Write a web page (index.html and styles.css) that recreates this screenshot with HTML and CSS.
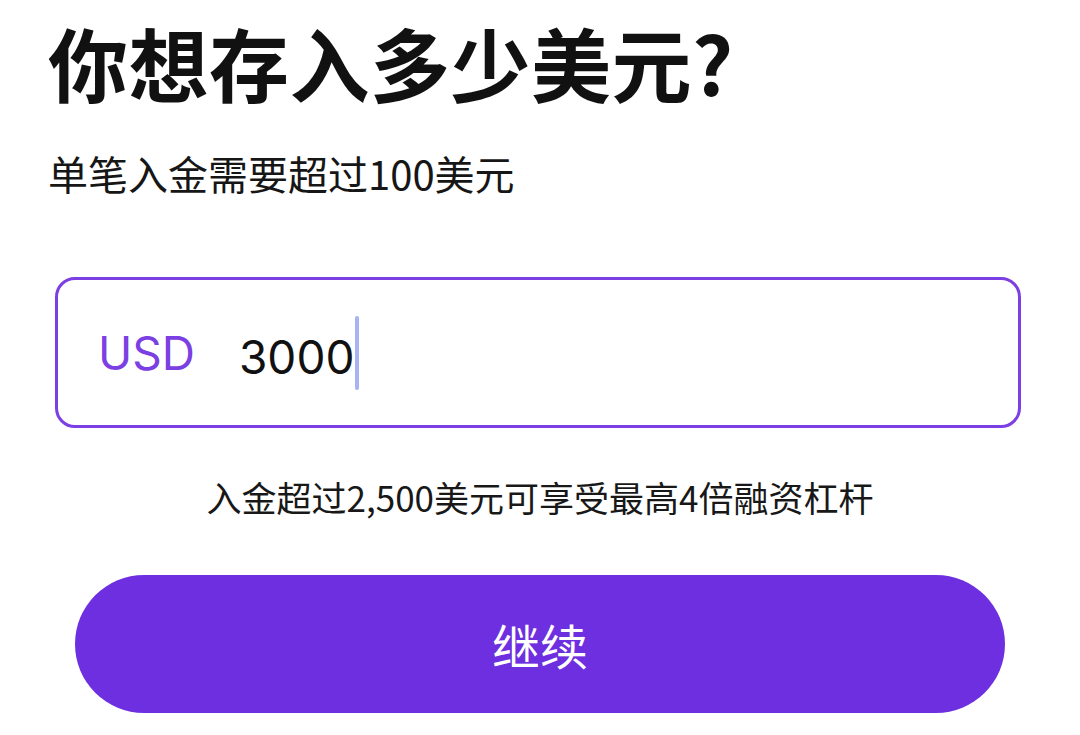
FILE: index.html
```html
<!DOCTYPE html>
<html lang="zh-CN">
<head>
<meta charset="utf-8">
<link rel="stylesheet" href="styles.css">
</head>
<body>
<main class="page">
  <h1 class="title">你想存入多少美元?</h1>
  <p class="subtitle">单笔入金需要超过100美元</p>
  <div class="amount-box">
    <span class="currency">USD</span>
    <span class="amount">3000</span><span class="caret"></span>
  </div>
  <p class="hint">入金超过2,500美元可享受最高4倍融资杠杆</p>
  <button class="continue">继续</button>
</main>
</body>
</html>
```
FILE: styles.css
```css
html, body {
  margin: 0;
  padding: 0;
  background: #ffffff;
}
body {
  font-family: "Noto Sans CJK SC", "Noto Sans", sans-serif;
  color: #111111;
  width: 1080px;
  height: 735px;
  overflow: hidden;
}
.page {
  display: flex;
  flex-direction: column;
  padding: 11px 0 0 0;
}
.title {
  margin: 0 0 0 48px;
  font-size: 80px;
  font-weight: 700;
  line-height: 100px;
  letter-spacing: 0.5px;
  color: #111111;
}
.subtitle {
  margin: 38px 0 0 48px;
  font-size: 40px;
  line-height: 48px;
  font-weight: 400;
  color: #161616;
}
.amount-box {
  margin: 80px 0 0 55px;
  height: 145px;
  border: 3px solid #7b3fe4;
  border-radius: 20px;
  display: flex;
  align-items: center;
  padding-left: 40px;
  box-sizing: content-box;
  width: 920px;
}
.currency {
  font-family: "Inter", "Noto Sans", sans-serif;
  font-size: 46px;
  color: #7b3fe4;
  font-weight: 400;
}
.amount {
  margin-left: 44px;
  font-family: "Inter", "Noto Sans", sans-serif;
  font-size: 46px;
  color: #111111;
  margin-top: 8px;
}
.caret {
  display: inline-block;
  width: 4px;
  height: 74px;
  border-radius: 2px;
  background: #a7b3f2;
  margin-left: 1px;
}
.hint {
  margin: 49px 0 0 0;
  text-align: center;
  font-size: 35px;
  line-height: 40px;
  color: #181818;
}
.continue {
  margin: 58px 0 0 75px;
  width: 930px;
  height: 138px;
  border: none;
  border-radius: 69px;
  background: #6e2fe0;
  color: #ffffff;
  font-family: "Noto Sans CJK SC", sans-serif;
  font-size: 48px;
  font-weight: 400;
  padding: 0;
}
```
